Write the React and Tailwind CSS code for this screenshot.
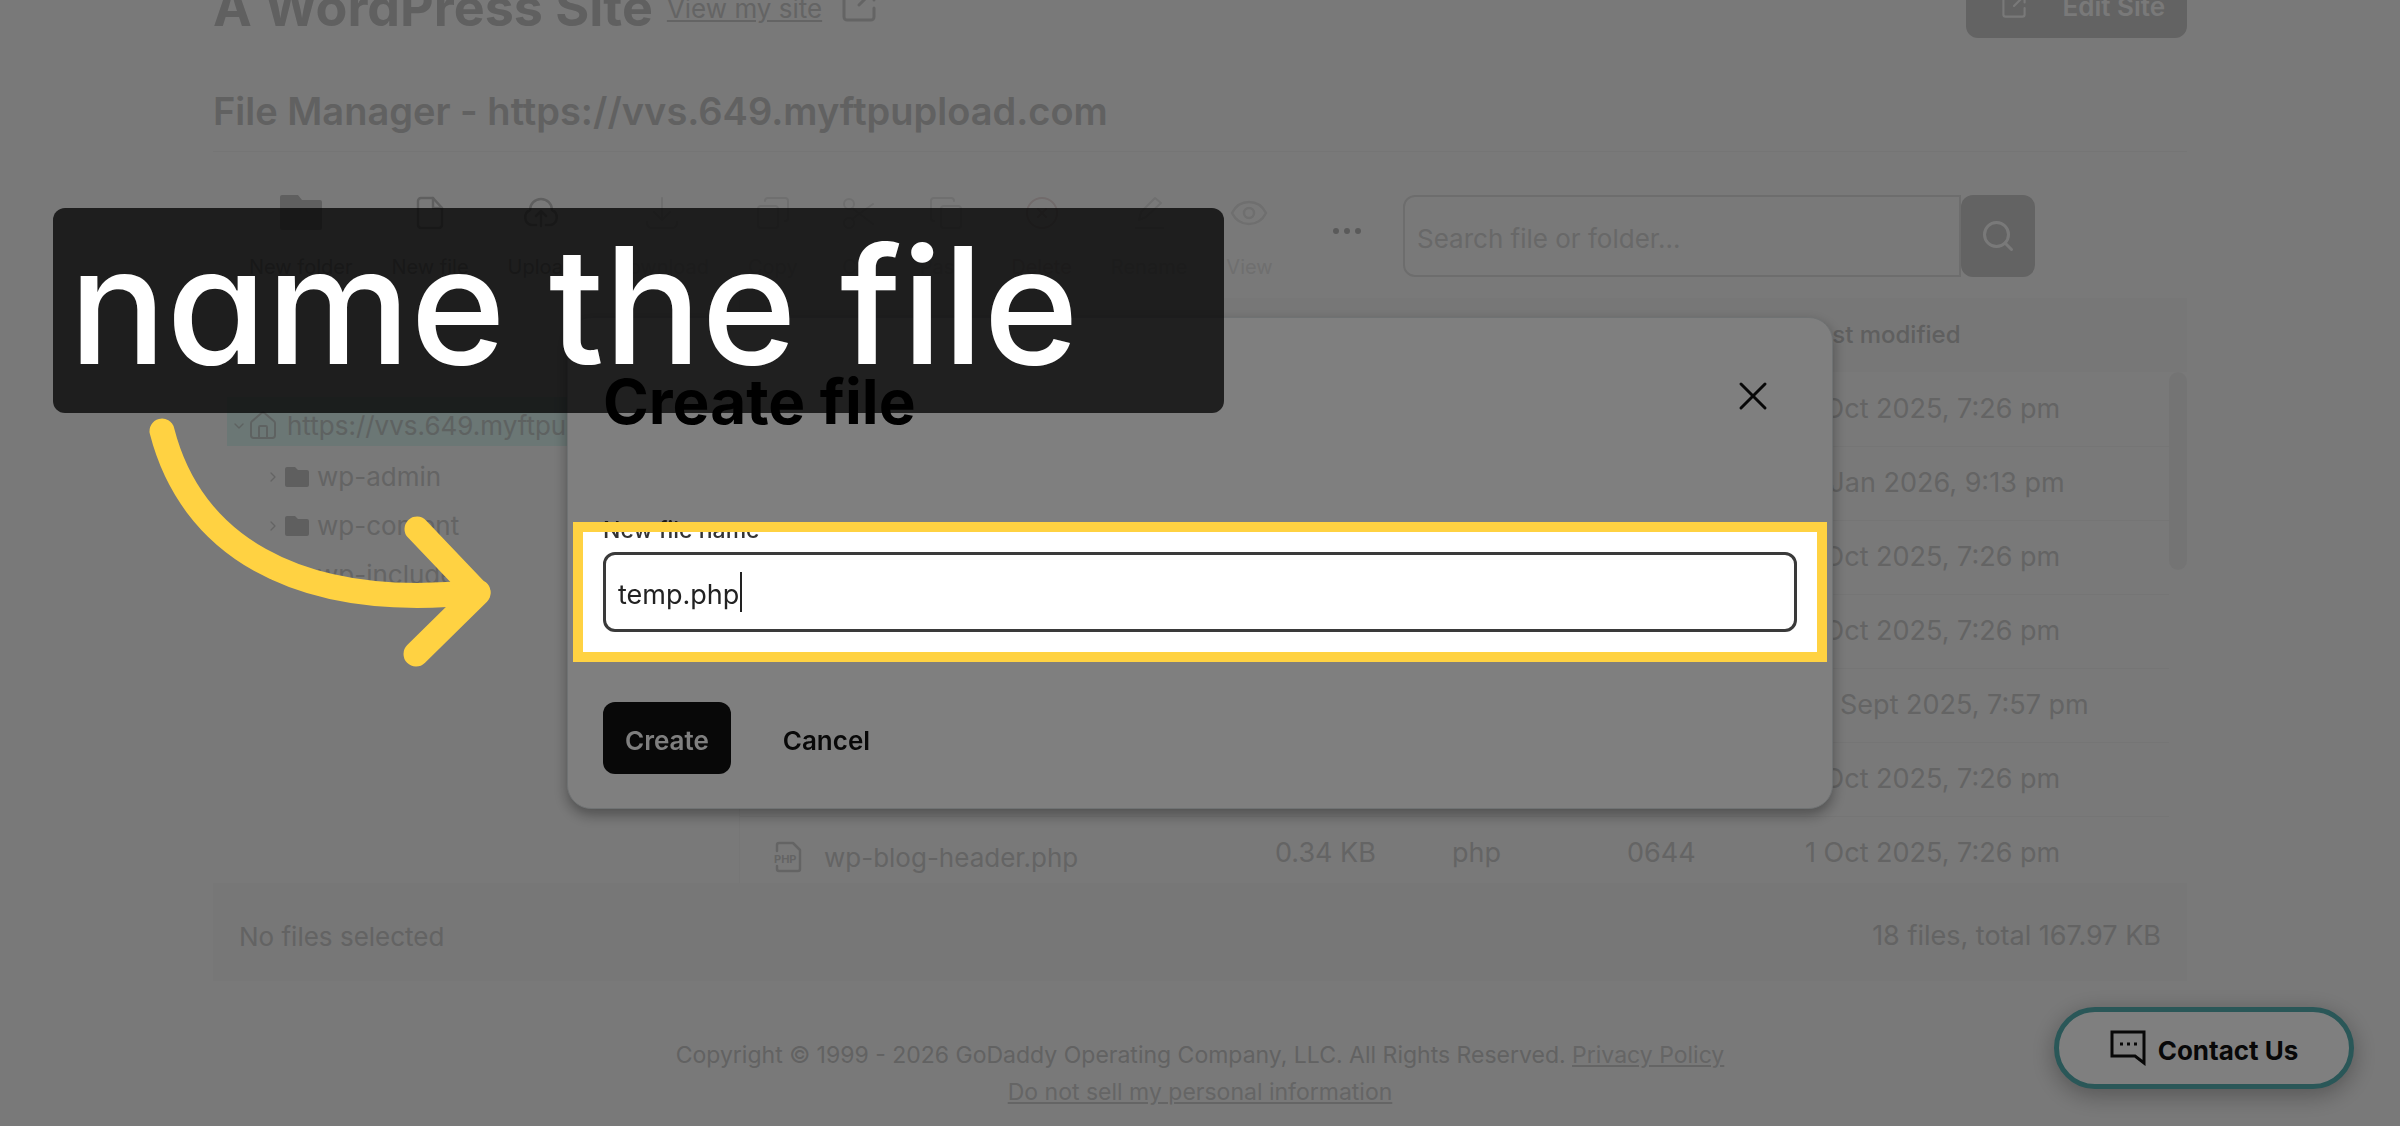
import { useState } from 'react';
import { ChevronDown, ChevronRight, House, Search, X } from 'lucide-react';

const stroke = { fill: 'none', stroke: 'currentColor', strokeWidth: 2, strokeLinecap: 'round', strokeLinejoin: 'round' };

const tools = [
  { label: 'New folder', tone: 'text-[#bebebe]', icon: <path d="M1 2a2 2 0 0 1 2-2h16l4 5h18a2 2 0 0 1 2 2v26a2 2 0 0 1-2 2H3a2 2 0 0 1-2-2z" fill="currentColor" /> },
  { label: 'New file', tone: 'text-[#bebebe]', icon: <g {...stroke} strokeWidth="2.5"><path d="M25 3H13a3 3 0 0 0-3 3v24a3 3 0 0 0 3 3h18a3 3 0 0 0 3-3V13z" /><path d="M25 3v10h9" /></g> },
  { label: 'Upload', tone: 'text-[#bebebe]', icon: <g {...stroke} strokeWidth="2.5"><path d="M17 30h-5a8 8 0 0 1-1-15 11 11 0 0 1 22 0 8 8 0 0 1-1 15h-5" /><path d="M22 31V17M17 21l5-5 5 5" /></g> },
  { label: 'Download', tone: 'text-[#dedede]', icon: <g {...stroke}><path d="M22 3v22M14 17l8 8 8-8M7 27c0 4 2 6 5 6h20c3 0 5-2 5-6" /></g> },
  { label: 'Copy', tone: 'text-[#dedede]', icon: <g {...stroke}><rect x="7" y="11" width="20" height="22" rx="3" /><path d="M14 6a3 3 0 0 1 3-3h17a3 3 0 0 1 3 3v17a3 3 0 0 1-3 3" /></g> },
  { label: 'Cut', tone: 'text-[#dedede]', icon: <g {...stroke}><circle cx="12" cy="9" r="5" /><circle cx="12" cy="28" r="5" /><path d="M15 13l21 16M15 24L36 9" /></g> },
  { label: 'Paste', tone: 'text-[#dedede]', icon: <g {...stroke}><rect x="17" y="11" width="20" height="22" rx="3" /><path d="M30 6a3 3 0 0 0-3-3H10a3 3 0 0 0-3 3v17a3 3 0 0 0 3 3" /></g> },
  { label: 'Delete', tone: 'text-[#e2d6d6]', icon: <g {...stroke}><circle cx="22" cy="18" r="15" /><path d="M18 14l8 8M26 14l-8 8" /></g> },
  { label: 'Rename', tone: 'text-[#dedede]', icon: <g {...stroke}><path d="M12 25l2-8L28 3l6 5-15 14zM9 33h27" /></g> },
  { label: 'View', tone: 'text-[#dedede]', icon: <g {...stroke} strokeWidth="2.5"><path d="M5 18c4-8 10-11 17-11s13 3 17 11c-4 8-10 11-17 11S9 26 5 18z" /><circle cx="22" cy="18" r="5" /></g> },
];

const rows = [
  { modified: '1 Oct 2025, 7:26 pm' },
  { modified: '6 Jan 2026, 9:13 pm' },
  { modified: '1 Oct 2025, 7:26 pm' },
  { modified: '1 Oct 2025, 7:26 pm' },
  { modified: '21 Sept 2025, 7:57 pm' },
  { modified: '1 Oct 2025, 7:26 pm' },
  { name: 'wp-blog-header.php', size: '0.34 KB', type: 'php', perms: '0644', modified: '1 Oct 2025, 7:26 pm' },
];

const folders = ['wp-admin', 'wp-content', 'wp-includes'];

function ExternalIcon({ className }) {
  return (
    <svg className={className} viewBox="0 0 34 34" {...stroke} strokeWidth="3">
      <path d="M14 4H5a3 3 0 0 0-3 3v22a3 3 0 0 0 3 3h24a3 3 0 0 0 3-3v-9M22 2h10v10M32 2L17 17" />
    </svg>
  );
}

function FolderIcon() {
  return (
    <svg className="h-5 w-6 shrink-0 text-[#bebebe]" viewBox="0 0 24 20" fill="currentColor">
      <path d="M0 2a2 2 0 0 1 2-2h8l3 3h9a2 2 0 0 1 2 2v13a2 2 0 0 1-2 2H2a2 2 0 0 1-2-2z" />
    </svg>
  );
}

function PhpIcon() {
  return (
    <svg className="h-8 w-7 shrink-0" viewBox="0 0 28 32">
      <path d="M3 10V4a2 2 0 0 1 2-2h14l7 7v19a2 2 0 0 1-2 2H5a2 2 0 0 1-2-2v-3" {...stroke} strokeWidth="2.5" />
      <text x="0" y="22" fontSize="11" fontWeight="700" fill="currentColor">PHP</text>
    </svg>
  );
}

function FileTree() {
  return (
    <nav className="w-[526px] shrink-0 pt-[99px] pl-[14px] text-[26px] leading-[49px] text-[#c8c8c8]">
      <a href="#root" className="flex items-center bg-[#d6eeea] pt-2 pl-1 leading-[41px] text-[#bcc4c2]">
        <ChevronDown className="h-4 w-4" />
        <House className="mr-2 h-8 w-8" strokeWidth={1.5} />
        https://vvs.649.myftpupload.com
      </a>
      <ul className="pt-[6px]">
        {folders.map((name) => (
          <li key={name} className="flex items-center pl-[38px]">
            <ChevronRight className="mr-1 h-4 w-4" />
            <FolderIcon />
            <a href={`#${name}`} className="ml-2">{name}</a>
          </li>
        ))}
      </ul>
    </nav>
  );
}

function FileTable() {
  return (
    <div className="flex h-[585px] min-w-0 flex-1 overflow-hidden border-l border-[#ececec]">
      <table className="h-fit w-full table-fixed text-left text-[27px] text-[#c8c8c8]">
        <colgroup>
          <col />
          <col className="w-[177px]" />
          <col className="w-[175px]" />
          <col className="w-[178px]" />
          <col className="w-[364px]" />
        </colgroup>
        <thead>
          <tr className="h-[74px] bg-[#eeeeee] text-[24px] text-[#bebebe]">
            <td colSpan={4} />
            <th className="font-medium">Last modified</th>
          </tr>
        </thead>
        <tbody>
          {rows.map((row, i) => (
            <tr key={i} className="h-[74px] border-b border-[#ebebeb]">
              <td className="pl-[34px]">
                {row.name && (
                  <span className="flex items-center gap-[22px] pt-2 text-[26px]">
                    <PhpIcon />
                    {row.name}
                  </span>
                )}
              </td>
              <td>{row.size}</td>
              <td>{row.type}</td>
              <td>{row.perms}</td>
              <td>{row.modified}</td>
            </tr>
          ))}
        </tbody>
      </table>
      <div className="w-[18px] shrink-0">
        <div className="h-[74px] bg-[#eeeeee]" />
        <div className="h-[198px] rounded-full bg-[#e9e9e9]" />
      </div>
    </div>
  );
}

function CreateFileDialog() {
  const [name, setName] = useState('temp.php');

  return (
    <div className="fixed inset-0 z-10 flex items-center justify-center">
      <div role="dialog" aria-labelledby="dialog-title" className="w-[1266px] rounded-3xl border border-[#dfe4e6] bg-white px-[35px] pt-[52px] pb-[34px] shadow-[0_6px_14px_rgba(0,0,0,0.35)]">
        <div className="flex items-center justify-between pr-5">
          <h2 id="dialog-title" className="text-[62px] leading-[64px] font-bold text-black">Create file</h2>
          <button aria-label="Close" className="mb-3 text-[#111111]">
            <X className="h-12 w-12" strokeWidth={1.5} />
          </button>
        </div>
        <div className="relative mt-[78px]">
          <label htmlFor="file-name" className="block text-[23px] leading-9 font-medium text-[#333333]">New file name</label>
          <input
            id="file-name"
            value={name}
            onChange={(e) => setName(e.target.value)}
            className="mt-1 block h-20 w-full rounded-xl border-3 border-[#3a3a3a] px-3 pt-1 text-[27px] text-[#222222] outline-none"
          />
          <span className="absolute bottom-5 left-[137px] h-10 w-[2px] bg-[#222222]" />
          {/* spotlight: the huge spread dims everything outside the field */}
          <div className="pointer-events-none absolute -inset-x-[30px] top-[10px] -bottom-[30px] border-10 border-[#ffd242] shadow-[0_0_0_3000px_rgba(0,0,0,0.5)]" />
        </div>
        <div className="mt-[70px] flex gap-[30px] text-[26px] font-semibold">
          <button className="h-[72px] rounded-xl bg-[#111111] px-[22px] pt-1 text-white">Create</button>
          <button className="h-[72px] px-[22px] pt-1 text-[#111111]">Cancel</button>
        </div>
      </div>
    </div>
  );
}

export default function App() {
  return (
    <div className="relative min-h-screen overflow-hidden bg-[#f3f3f3] font-[Inter,sans-serif]">
      <div className="mx-auto max-w-[1974px]">
        <header className="flex h-[38px] items-end justify-between overflow-hidden">
          <div className="flex items-end text-[#c8c8c8]">
            <h1 className="text-[52px] leading-[60px] font-bold text-[#c0c0c0]">A WordPress Site</h1>
            <a href="#site" className="mb-[10px] ml-[14px] text-[26px] underline">View my site</a>
            <ExternalIcon className="mb-4 ml-5 h-[34px] w-[34px]" />
          </div>
          <button className="flex h-[68px] shrink-0 items-center rounded-xl bg-[#c6c6c6] pt-1 pr-[22px] pl-9 text-[26px] font-semibold text-[#f3f3f3]">
            <ExternalIcon className="mr-9 h-6 w-6" />
            Edit Site
          </button>
        </header>

        <h2 className="mt-[49px] border-b border-[#ebebeb] pb-4 text-[38px] leading-[48px] font-semibold text-[#c2c2c2]">
          File Manager - https://vvs.649.myftpupload.com
        </h2>

        <div className="mt-[43px] flex items-start">
          <div className="flex gap-[39px] pl-9">
            {tools.map((tool) => (
              <button key={tool.label} className={`flex flex-col items-center gap-[22px] text-[20px] leading-7 ${tool.tone}`}>
                <svg className="h-9 w-11" viewBox="0 0 44 36">{tool.icon}</svg>
                {tool.label}
              </button>
            ))}
          </div>
          <button aria-label="More actions" className="mt-7 ml-[60px] text-[#b4b4b4]">
            <svg className="h-4 w-7" viewBox="0 0 28 16" fill="currentColor">
              <circle cx="3" cy="8" r="3" />
              <circle cx="14" cy="8" r="3" />
              <circle cx="25" cy="8" r="3" />
            </svg>
          </button>
          <form className="mr-[152px] ml-auto flex">
            <input
              type="search"
              aria-label="Search file or folder"
              placeholder="Search file or folder..."
              className="h-[82px] w-[558px] rounded-l-xl border-2 border-[#dadada] px-3 pt-1 text-[26px] placeholder:text-[#d0d0d0]"
            />
            <button type="button" aria-label="Search" className="flex w-[74px] items-center justify-center rounded-xl bg-[#c6c6c6] text-[#f3f3f3]">
              <Search className="h-9 w-9" strokeWidth={2} />
            </button>
          </form>
        </div>

        <div className="mt-[17px] flex">
          <FileTree />
          <FileTable />
        </div>
        <div className="flex h-[98px] items-center justify-between bg-[#eeeeee] px-[26px] pt-2 text-[#c6c6c6]">
          <span className="text-[26px]">No files selected</span>
          <span className="text-[27px]">18 files, total 167.97 KB</span>
        </div>

        <footer className="mt-[56px] text-center text-[23px] leading-[37px] text-[#c4c4c4]">
          <p>
            Copyright © 1999 - 2026 GoDaddy Operating Company, LLC. All Rights Reserved.{' '}
            <a href="#privacy" className="text-[#cacaca] underline">Privacy Policy</a>
          </p>
          <a href="#do-not-sell" className="text-[#cacaca] underline">Do not sell my personal information</a>
        </footer>
      </div>

      <button className="absolute right-[46px] bottom-[37px] flex h-[82px] w-[300px] items-center justify-center rounded-full border-5 border-[#54aeb0] bg-white text-[26px] font-bold text-[#111111] shadow-[0_6px_24px_rgba(0,0,0,0.3)]">
        <svg className="mr-3 h-9 w-9" viewBox="0 0 36 36" fill="none" stroke="currentColor" strokeWidth="3">
          <path d="M2 2h32v31l-9-7H2z" />
          <path d="M10 14h3M17 14h3M24 14h3" />
        </svg>
        <span className="pt-1">Contact Us</span>
      </button>

      <CreateFileDialog />

      <div className="absolute top-[208px] left-[53px] z-20 h-[205px] w-[1171px] rounded-xl bg-black/75 px-4">
        <p className="text-[162px] leading-[194px] font-medium text-white [font-feature-settings:'cv11'] [font-variant-ligatures:none]">name the file</p>
      </div>
      <svg className="absolute top-[410px] left-[140px] z-20 h-[270px] w-[360px]" viewBox="140 410 360 270" fill="none" stroke="#ffd242" strokeWidth="25" strokeLinecap="round" strokeLinejoin="round">
        <path d="M162 431C190 540 290 612 478 592" />
        <path d="M417 529L478 593L416 654" />
      </svg>
    </div>
  );
}
